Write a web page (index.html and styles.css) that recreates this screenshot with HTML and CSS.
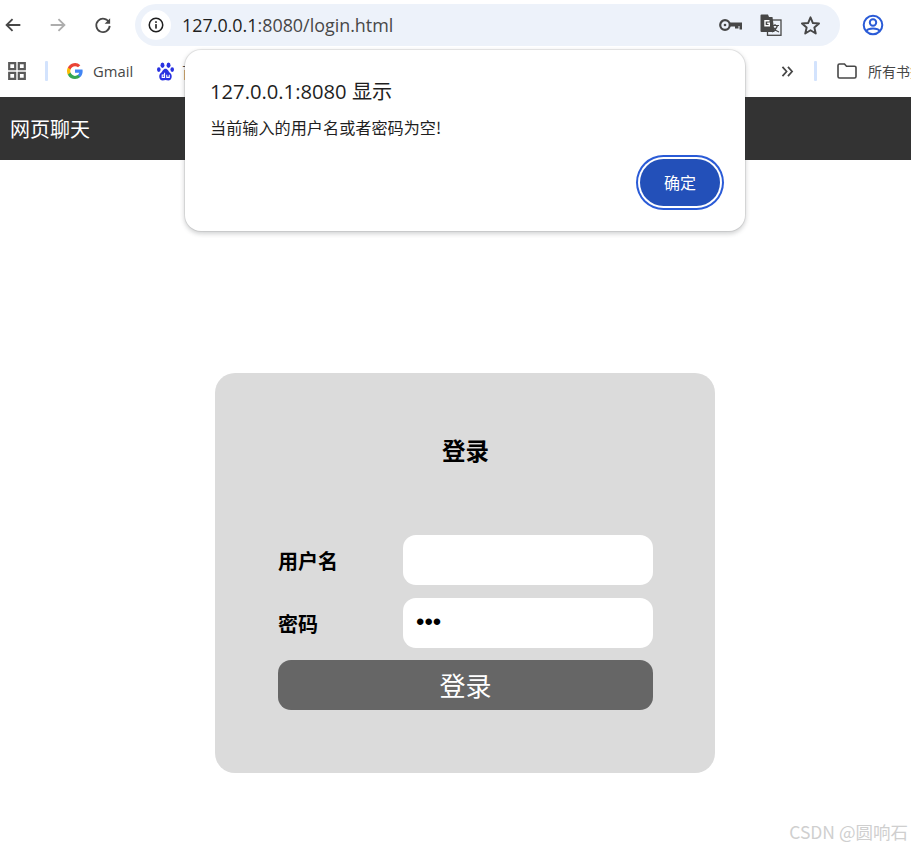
FILE: index.html
```html
<!DOCTYPE html>
<html lang="zh-CN">
<head>
<meta charset="utf-8">
<title>登录</title>
<link rel="stylesheet" href="styles.css">
</head>
<body>
<header class="chrome">
  <div class="toolbar">
    <div class="nav-buttons">
      <svg class="ic" viewBox="0 0 24 24" width="22" height="22"><path d="M20 12H5M11.5 5.5L5 12l6.500 6.500" fill="none" stroke="#474747" stroke-width="2"/></svg>
      <svg class="ic" viewBox="0 0 24 24" width="22" height="22"><path d="M4 12h15M12.500 5.500L19 12l-6.500 6.500" fill="none" stroke="#adadad" stroke-width="2"/></svg>
      <svg class="ic" viewBox="0 0 24 24" width="22" height="22"><path d="M18.700 9.500A7.300 7.300 0 1 0 19.300 13" fill="none" stroke="#474747" stroke-width="2"/><path d="M19.800 4.500v6h-6z" fill="#474747"/></svg>
    </div>
    <div class="omnibox">
      <span class="site-info"><svg viewBox="0 0 20 20" width="18" height="18"><circle cx="10" cy="10" r="7.500" fill="none" stroke="#1f1f1f" stroke-width="1.700"/><rect x="9.100" y="9" width="1.800" height="5" fill="#1f1f1f"/><rect x="9.100" y="5.800" width="1.800" height="1.900" fill="#1f1f1f"/></svg></span>
      <span class="url"><span class="url-host">127.0.0.1</span>:8080/login.html</span>
      <span class="omni-actions">
        <svg viewBox="0 0 24 14" width="24" height="14"><circle cx="6" cy="7" r="4.800" fill="none" stroke="#474747" stroke-width="2.200"/><circle cx="6" cy="7" r="1.300" fill="#474747"/><path d="M10.500 4.500h12.500v7h-2.500V8h-1v2.500h-3.500V8.500h-5.500z" fill="#474747"/></svg>
        <svg viewBox="0 0 22 22" width="22" height="22"><rect x="7.500" y="6" width="13.500" height="15.300" fill="#edf2fa" stroke="#474747" stroke-width="1.300"/><path d="M0.500 1.500a1 1 0 0 1 1-1h6.500l1 2.500h3.500l2 15H1.500a1 1 0 0 1-1-1z" fill="#474747"/><path d="M9.500 6.800H5v5h4.300V9.300H7.200" fill="none" stroke="#fff" stroke-width="1.400"/><path d="M11.500 11.500h7.500M15 10v1.500M17.500 11.500c-1 3-3 5-5.500 6.500M13.500 13.500c1 1.800 3 3.500 5.500 4.500" fill="none" stroke="#474747" stroke-width="1.200"/></svg>
        <svg viewBox="0 0 24 24" width="23" height="23"><path d="M12 3.500l2.500 5.900 6.400.5-4.900 4.200 1.500 6.300-5.500-3.400-5.500 3.400 1.500-6.300-4.900-4.200 6.400-.5z" fill="none" stroke="#474747" stroke-width="2" stroke-linejoin="round"/></svg>
      </span>
    </div>
    <svg class="profile" viewBox="0 0 24 24" width="24" height="24"><circle cx="12" cy="12" r="9.300" fill="none" stroke="#2a5bd7" stroke-width="2"/><circle cx="12" cy="9.500" r="3.200" fill="none" stroke="#2a5bd7" stroke-width="2"/><path d="M5.500 18c2-3.200 11-3.200 13 0" fill="none" stroke="#2a5bd7" stroke-width="2"/></svg>
  </div>
  <div class="bookmarks">
    <svg class="apps" viewBox="0 0 18 18" width="18" height="18"><path d="M1.200 1.200h6v6h-6zM10.800 1.200h6v6h-6zM1.200 10.800h6v6h-6zM10.800 10.800h6v6h-6z" fill="none" stroke="#5a5a5a" stroke-width="2.200"/></svg>
    <span class="sep"></span>
    <span class="bm bm-gmail">
      <svg viewBox="0 0 18 18" width="16" height="16"><path d="M17.600 9.200c0-.6-.1-1.200-.2-1.800H9v3.500h4.800a4.100 4.100 0 0 1-1.800 2.700v2.200h2.900c1.700-1.600 2.700-3.900 2.700-6.600z" fill="#4285f4"/><path d="M9 18c2.400 0 4.500-.8 5.900-2.200L12 13.600c-.8.500-1.800.9-3 .9-2.300 0-4.300-1.600-5-3.700H1v2.300A9 9 0 0 0 9 18z" fill="#34a853"/><path d="M4 10.800a5.400 5.400 0 0 1 0-3.500V5H1a9 9 0 0 0 0 8.100z" fill="#fbbc05"/><path d="M9 3.600c1.300 0 2.500.5 3.400 1.300L15 2.400A9 9 0 0 0 1 5l3 2.300c.7-2.100 2.700-3.700 5-3.700z" fill="#ea4335"/></svg>
      <span class="bm-label">Gmail</span>
    </span>
    <span class="bm bm-baidu">
      <svg viewBox="0 0 18 20" width="17" height="19"><g fill="#2932e1"><ellipse cx="5.800" cy="3.300" rx="2.100" ry="2.900"/><ellipse cx="12.200" cy="3.300" rx="2.100" ry="2.900"/><ellipse cx="1.900" cy="8" rx="1.900" ry="2.500"/><ellipse cx="16.100" cy="8" rx="1.900" ry="2.500"/><path d="M9 7c-2.500 0-3 3-5 4.500-2.800 2.200-1.800 8 2 8 1 0 2-.5 3-.5s2 .5 3 .5c3.800 0 4.800-5.800 2-8-2-1.500-2.500-4.500-5-4.500z"/></g><path d="M8 11.200v5H5.500v-2.500H8M10.300 13.500v2.700h2.700v-2.700" fill="none" stroke="#fff" stroke-width="1.100"/></svg>
      <span class="bm-label">百度</span>
    </span>
    <span class="bm-right">
      <svg class="more" viewBox="0 0 14 12" width="13" height="11"><path d="M1.500 1l4.500 5-4.500 5M7.500 1l4.500 5-4.500 5" fill="none" stroke="#474747" stroke-width="1.900"/></svg>
      <span class="sep"></span>
      <span class="bm bm-folder">
        <svg viewBox="0 0 20 16" width="20" height="16"><path d="M1 2.500a1.500 1.500 0 0 1 1.500-1.500h5l2 2.200h8a1.500 1.500 0 0 1 1.500 1.500v8.800a1.500 1.500 0 0 1-1.500 1.500h-15a1.500 1.500 0 0 1-1.500-1.500z" fill="none" stroke="#474747" stroke-width="1.600"/></svg>
        <span class="bm-label bm-all">所有书签</span>
      </span>
    </span>
  </div>
</header>

<nav class="app-nav">网页聊天</nav>

<main class="page">
  <form class="login-card">
    <h1 class="login-title">登录</h1>
    <div class="login-row">
      <label class="login-label">用户名</label>
      <input class="login-input" type="text">
    </div>
    <div class="login-row">
      <label class="login-label">密码</label>
      <input class="login-input" type="password" value="123">
    </div>
    <button class="login-submit" type="button">登录</button>
  </form>
</main>

<div class="alert">
  <div class="alert-title">127.0.0.1:8080 显示</div>
  <div class="alert-message">当前输入的用户名或者密码为空!</div>
  <div class="alert-actions"><button class="alert-ok" type="button">确定</button></div>
</div>

<div class="watermark">CSDN @圆响石</div>
</body>
</html>
```
FILE: styles.css
```css
* { box-sizing: border-box; }
html, body { margin: 0; height: 100%; overflow: hidden; }
body {
  position: relative;
  background: #fff;
  font-family: "Open Sans", "Noto Sans CJK SC", sans-serif;
  color: #000;
}

.chrome { height: 97px; background: #fff; }
.toolbar { display: flex; align-items: center; height: 50px; }
.nav-buttons { display: flex; align-items: center; gap: 23px; width: 135px; padding-left: 2px; }
.ic { flex: none; }
.omnibox {
  display: flex;
  align-items: center;
  width: 705px;
  height: 42px;
  border-radius: 21px;
  background: #edf2fa;
  padding: 0 18px 0 6px;
}
.site-info {
  display: flex;
  align-items: center;
  justify-content: center;
  width: 30px;
  height: 30px;
  border-radius: 50%;
  background: #fff;
}
.url {
  margin-left: 11px;
  font-family: "Open Sans", sans-serif;
  font-size: 17.900px;
  color: #474747;
  white-space: nowrap;
}
.url-host { color: #1f1f1f; }
.omni-actions { display: flex; align-items: center; gap: 17px; margin-left: auto; }
.profile { margin-left: 21px; flex: none; }

.bookmarks { display: flex; align-items: center; height: 42px; padding-left: 8px; font-size: 14px; color: #474747; white-space: nowrap; overflow: hidden; }
.apps { flex: none; }
.sep { flex: none; width: 3px; height: 20px; background: #d3e3fd; border-radius: 1px; }
.bookmarks > .sep { margin-left: 19px; }
.bm { display: flex; align-items: center; }
.bm-gmail { margin-left: 19px; width: 90px; gap: 10px; }
.bm-baidu { gap: 8px; }
.bm-label { font-size: 14.800px; color: #474747; }
.bm-right { display: flex; align-items: center; position: absolute; left: 781px; top: 50px; height: 42px; }
.more { flex: none; }
.bm-right .sep { margin-left: 20px; }
.bm-folder { margin-left: 20px; gap: 11px; }
.bm-all { font-family: "Noto Sans CJK SC", sans-serif; font-size: 14px; }

.app-nav {
  height: 63px;
  margin-top: 1px;
  display: flex;
  align-items: center;
  padding-left: 10px;
  background: #333;
  color: #fff;
  font-family: "Noto Sans CJK SC", sans-serif;
  font-size: 20px;
}
.chrome { height: 96px; }

.page { padding: 213px 0 0 215px; }
.login-card {
  display: flex;
  flex-direction: column;
  width: 500px;
  height: 400px;
  padding: 0 62px 0 63px;
  border-radius: 20px;
  background: #dbdbdb;
}
.login-title {
  margin: 0;
  height: 162px;
  padding-top: 60px;
  text-align: center;
  font-size: 23.500px;
  line-height: 34px;
  font-weight: 700;
  font-family: "Noto Sans CJK SC", sans-serif;
}
.login-row { display: flex; align-items: center; height: 50px; margin-bottom: 13px; }
.login-row + .login-row { margin-bottom: 12px; }
.login-label {
  width: 125px;
  font-family: "Noto Sans CJK SC", sans-serif;
  font-size: 20px;
  font-weight: 700;
}
.login-input {
  width: 250px;
  height: 50px;
  border: 0;
  border-radius: 13px;
  background: #fff;
  padding: 0 0 2px 13px;
  font-size: 24px;
  font-family: "Liberation Sans", sans-serif;
  color: #000;
  outline: none;
}
.login-submit {
  width: 375px;
  height: 50px;
  border: 0;
  border-radius: 13px;
  background: #666;
  color: #fff;
  font-family: "Noto Sans CJK SC", sans-serif;
  font-size: 26px;
  padding: 0 0 2px;
}

.alert {
  position: absolute;
  left: 185px;
  top: 50px;
  width: 560px;
  height: 181px;
  padding: 27px 25px 0 25px;
  background: #fff;
  border-radius: 16px;
  box-shadow: 0 0 0 1px rgba(0,0,0,.07), 0 2px 4px 1px rgba(60,64,67,.22);
  color: #1f1f1f;
}
.alert-title {
  font-family: "Open Sans", "Noto Sans CJK SC", sans-serif;
  font-size: 20.200px;
  line-height: 28px;
}
.alert-message {
  margin-top: 12px;
  font-family: "Noto Sans CJK SC", sans-serif;
  font-size: 16.150px;
  line-height: 20px;
}
.alert-actions { display: flex; justify-content: flex-end; margin-top: 22px; }
.alert-ok {
  width: 80px;
  height: 47px;
  border: 0;
  border-radius: 24px;
  background: #2350b9;
  color: #fff;
  font-family: "Noto Sans CJK SC", sans-serif;
  font-size: 16px;
  padding: 0 0 2px;
  box-shadow: 0 0 0 2px #fff, 0 0 0 4px #2a5bd7;
}

.watermark {
  position: absolute;
  right: 3px;
  bottom: 5px;
  font-family: "Noto Sans CJK SC", sans-serif;
  font-size: 17.500px;
  color: #cfcfcf;
}
```
